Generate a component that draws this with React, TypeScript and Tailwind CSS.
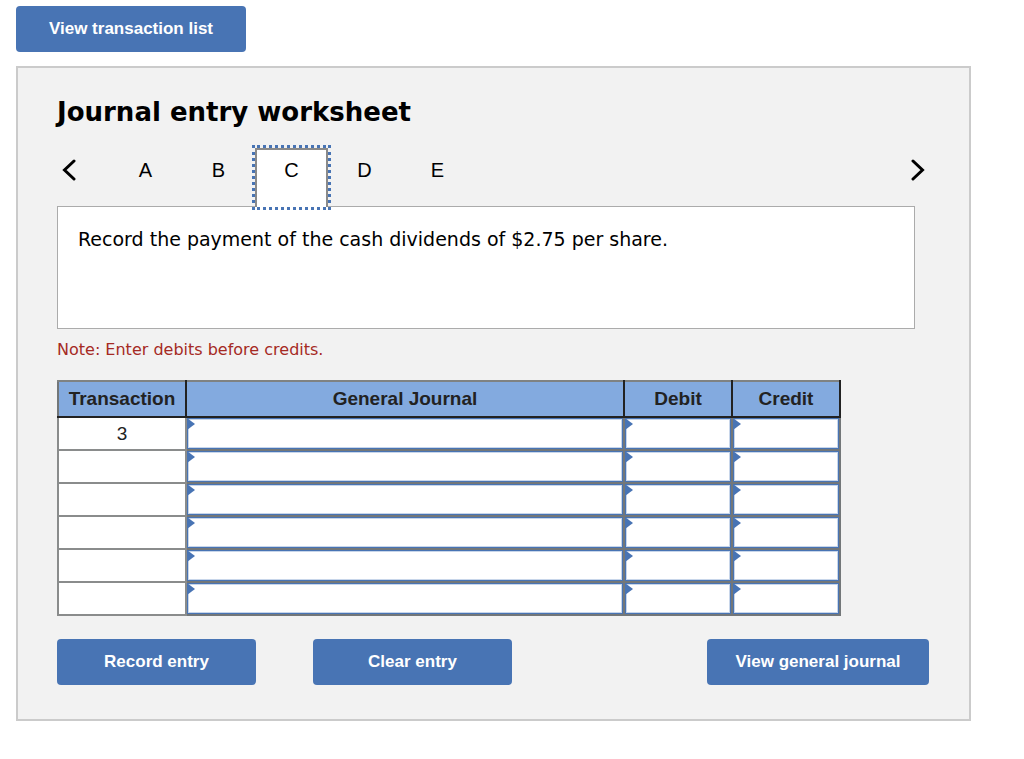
import { useState } from "react";
import { clsx } from "clsx";

const tabs = ["A", "B", "C", "D", "E"];

const rows = ["3", "", "", "", "", ""];

const columns = [
  { title: "Transaction", width: "w-[128px]" },
  { title: "General Journal", width: "w-auto" },
  { title: "Debit", width: "w-[108px]" },
  { title: "Credit", width: "w-[108px]" },
];

const buttonClass =
  "h-[46px] rounded-[4px] bg-[#4874b4] text-[17px] leading-6 font-bold text-white";

function Chevron({ direction }: { direction: "left" | "right" }) {
  return (
    <svg width="14" height="22" viewBox="0 0 14 22" fill="none" stroke="#000" strokeWidth="3" strokeLinecap="round">
      <path d={direction === "left" ? "M12 2 L2.5 11 L12 20" : "M2 2 L11.5 11 L2 20"} />
    </svg>
  );
}

function EntryCell({ label }: { label: string }) {
  return (
    <td className="border-2 border-[#737779] bg-white p-0">
      <div className="relative">
        <input
          type="text"
          aria-label={label}
          className="block h-[31px] w-full border border-[#4874b4] bg-white px-3 text-[18px] inset-shadow-[0_0_0_1px_#c8d6ea] outline-none"
        />
        <svg className="absolute top-0 left-0" width="8" height="12" viewBox="0 0 8 12">
          <path d="M0 0 L8 6 L0 12 Z" fill="#4874b4" />
        </svg>
      </div>
    </td>
  );
}

export default function App() {
  const [activeTab, setActiveTab] = useState("C");

  return (
    <div className="min-h-screen bg-white pt-[6px] pr-[53px] pb-[38px] pl-4 font-['Liberation_Sans',Arial,sans-serif] text-black">
      <button type="button" className={clsx(buttonClass, "w-[230px]")}>
        View transaction list
      </button>

      <main className="mt-[14px] border-2 border-[#cbcbcb] bg-[#f2f2f2] pt-[26px] pr-10 pb-[34px] pl-[39px]">
        <h1 className="font-['DejaVu_Sans',Verdana,sans-serif] text-[26px] leading-9 font-bold">
          Journal entry worksheet
        </h1>

        <div className="mt-[18px] flex h-[58px] items-start">
          <button type="button" aria-label="Previous" className="flex h-[43px] w-[52px] items-center pl-[5px]">
            <Chevron direction="left" />
          </button>
          <div role="tablist" className="flex">
            {tabs.map((tab) => (
              <button
                key={tab}
                type="button"
                role="tab"
                aria-selected={tab === activeTab}
                onClick={() => setActiveTab(tab)}
                className={clsx(
                  "flex w-[73px] justify-center text-[20px] leading-6",
                  tab === activeTab
                    ? "relative z-10 h-[59px] border-2 border-b-0 border-[#8a8a8a] bg-white pt-2 outline-3 outline-[#4874b4] outline-dotted"
                    : "h-[58px] pt-[10px]"
                )}
              >
                {tab}
              </button>
            ))}
          </div>
          <button type="button" aria-label="Next" className="ml-auto flex h-[43px] w-[52px] items-center justify-end pr-1">
            <Chevron direction="right" />
          </button>
        </div>

        <section className="mr-[14px] min-h-[123px] border border-[#ababab] bg-white px-5 pt-5">
          <p className="font-['DejaVu_Sans',Verdana,sans-serif] text-[19px] leading-6">
            Record the payment of the cash dividends of $2.75 per share.
          </p>
        </section>

        <p className="mt-[9px] font-['DejaVu_Sans',Verdana,sans-serif] text-[16px] leading-6 text-[#a52a24]">
          Note: Enter debits before credits.
        </p>

        <table className="mt-[18px] w-full max-w-[784px] table-fixed border-collapse">
          <thead>
            <tr className="h-[36px]">
              {columns.map((column) => (
                <th
                  key={column.title}
                  scope="col"
                  className={clsx(
                    "border-2 border-[#222] border-t-[#7f8282] bg-[#83aadf] p-0 text-[19px] leading-6 font-bold text-[#222] first:border-l-[#737779]",
                    column.width
                  )}
                >
                  {column.title}
                </th>
              ))}
            </tr>
          </thead>
          <tbody>
            {rows.map((transaction, index) => (
              <tr key={index} className="h-[33px]">
                <td className="border-2 border-[#8a8c8c] bg-white p-0 text-center text-[19px] leading-6 text-[#222]">
                  {transaction}
                </td>
                <EntryCell label={`General journal, row ${index + 1}`} />
                <EntryCell label={`Debit, row ${index + 1}`} />
                <EntryCell label={`Credit, row ${index + 1}`} />
              </tr>
            ))}
          </tbody>
        </table>

        <div className="mt-[23px] flex">
          <button type="button" className={clsx(buttonClass, "w-[199px]")}>
            Record entry
          </button>
          <button type="button" className={clsx(buttonClass, "ml-[57px] w-[199px]")}>
            Clear entry
          </button>
          <button type="button" className={clsx(buttonClass, "ml-auto w-[222px]")}>
            View general journal
          </button>
        </div>
      </main>
    </div>
  );
}
